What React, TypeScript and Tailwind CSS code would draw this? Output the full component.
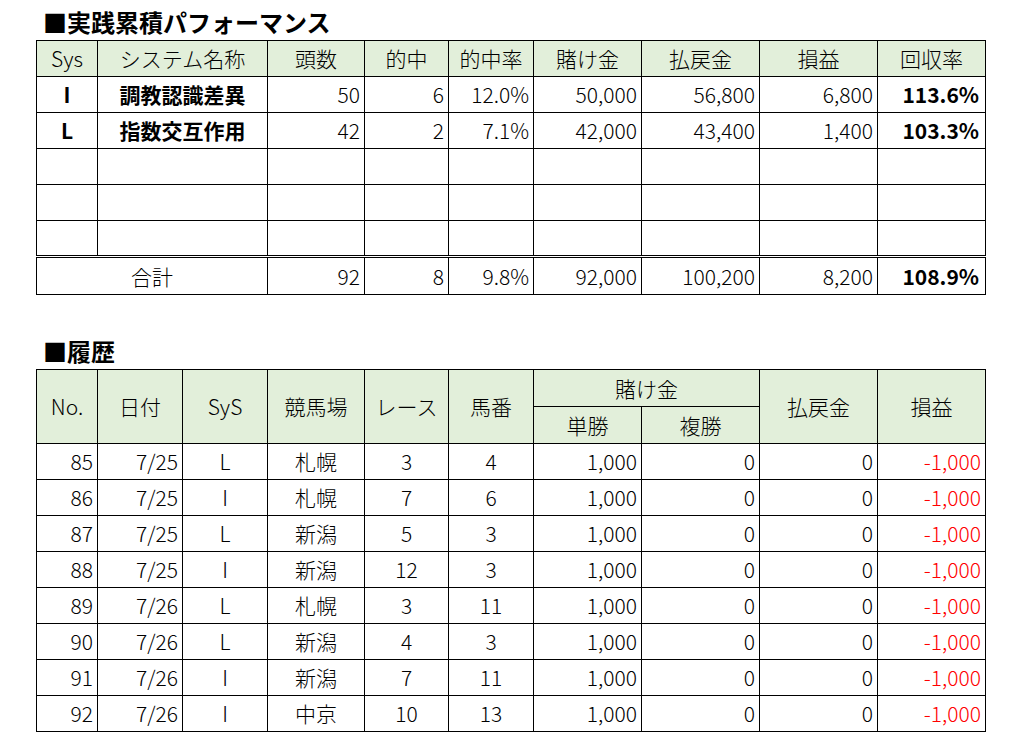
import React from "react";

const perf = [
  { sys: "I", name: "調教認識差異", n: "50", hit: "6", rate: "12.0%", bet: "50,000", ret: "56,800", pl: "6,800", rr: "113.6%" },
  { sys: "L", name: "指数交互作用", n: "42", hit: "2", rate: "7.1%", bet: "42,000", ret: "43,400", pl: "1,400", rr: "103.3%" },
];

const history = [
  ["85", "7/25", "L", "札幌", "3", "4"],
  ["86", "7/25", "I", "札幌", "7", "6"],
  ["87", "7/25", "L", "新潟", "5", "3"],
  ["88", "7/25", "I", "新潟", "12", "3"],
  ["89", "7/26", "L", "札幌", "3", "11"],
  ["90", "7/26", "L", "新潟", "4", "3"],
  ["91", "7/26", "I", "新潟", "7", "11"],
  ["92", "7/26", "I", "中京", "10", "13"],
];

const widths = ["w-[61px]", "w-[170px]", "w-[97px]", "w-[84px]", "w-[85px]", "w-[108px]", "w-[118px]", "w-[118px]", "w-[108px]"];
const histWidths = ["w-[61px]", "w-[85px]", "w-[85px]", "w-[97px]", "w-[84px]", "w-[85px]", "w-[108px]", "w-[118px]", "w-[118px]", "w-[108px]"];

const th = "border border-black bg-[#e2efda] text-center font-light";
const td = "border border-black h-[36px] p-0";
const num = `${td} text-right pr-[4px]`;
const totBase = "border border-black h-[38px] p-0 border-t-[3px] border-double";
const tot = `${totBase} text-right pr-[4px]`;

export default function App() {
  return (
    <div className="min-h-screen bg-white text-black font-['Noto_Sans_CJK_JP',sans-serif] font-light text-[21px] leading-none pl-[36px]">
      {/* 実践累積 */}
      <div className="h-[40px] pt-[4px] pl-[7px] leading-[36px] text-[24px] font-bold">■実践累積パフォーマンス</div>
      <table className="table-fixed border-collapse w-[950px]">
        <colgroup>
          {widths.map((w, i) => (
            <col key={i} className={w} />
          ))}
        </colgroup>
        <thead>
          <tr className="h-[36px]">
            <th className={th}>Sys</th>
            <th className={th}>システム名称</th>
            <th className={th}>頭数</th>
            <th className={th}>的中</th>
            <th className={th}>的中率</th>
            <th className={th}>賭け金</th>
            <th className={th}>払戻金</th>
            <th className={th}>損益</th>
            <th className={th}>回収率</th>
          </tr>
        </thead>
        <tbody>
          {perf.map((r) => (
            <tr key={r.sys}>
              <td className={`${td} text-center font-bold`}>{r.sys}</td>
              <td className={`${td} text-center font-bold`}>{r.name}</td>
              <td className={num}>{r.n}</td>
              <td className={num}>{r.hit}</td>
              <td className={num}>{r.rate}</td>
              <td className={num}>{r.bet}</td>
              <td className={num}>{r.ret}</td>
              <td className={num}>{r.pl}</td>
              <td className={`${num} font-bold pr-[6px]`}>{r.rr}</td>
            </tr>
          ))}
          {[0, 1, 2].map((i) => (
            <tr key={i}>
              {widths.map((_, j) => (
                <td key={j} className={td}></td>
              ))}
            </tr>
          ))}
          <tr>
            <td colSpan={2} className={`${totBase} text-center`}>合計</td>
            <td className={tot}>92</td>
            <td className={tot}>8</td>
            <td className={tot}>9.8%</td>
            <td className={tot}>92,000</td>
            <td className={tot}>100,200</td>
            <td className={tot}>8,200</td>
            <td className={`${totBase} text-right font-bold pr-[6px]`}>108.9%</td>
          </tr>
        </tbody>
      </table>

      {/* 履歴 */}
      <div className="mt-[34px] h-[40px] pt-[4px] pl-[7px] leading-[36px] text-[24px] font-bold">■履歴</div>
      <table className="table-fixed border-collapse w-[950px]">
        <colgroup>
          {histWidths.map((w, i) => (
            <col key={i} className={w} />
          ))}
        </colgroup>
        <thead>
          <tr className="h-[37px]">
            <th rowSpan={2} className={th}>No.</th>
            <th rowSpan={2} className={th}>日付</th>
            <th rowSpan={2} className={th}>SyS</th>
            <th rowSpan={2} className={th}>競馬場</th>
            <th rowSpan={2} className={th}>レース</th>
            <th rowSpan={2} className={th}>馬番</th>
            <th colSpan={2} className={th}>賭け金</th>
            <th rowSpan={2} className={th}>払戻金</th>
            <th rowSpan={2} className={th}>損益</th>
          </tr>
          <tr className="h-[37px]">
            <th className={th}>単勝</th>
            <th className={th}>複勝</th>
          </tr>
        </thead>
        <tbody>
          {history.map((r) => (
            <tr key={r[0]}>
              <td className={num}>{r[0]}</td>
              <td className={num}>{r[1]}</td>
              <td className={`${td} text-center`}>{r[2]}</td>
              <td className={`${td} text-center`}>{r[3]}</td>
              <td className={`${td} text-center`}>{r[4]}</td>
              <td className={`${td} text-center`}>{r[5]}</td>
              <td className={num}>1,000</td>
              <td className={num}>0</td>
              <td className={num}>0</td>
              <td className={`${num} text-[#ff0000]`}>-1,000</td>
            </tr>
          ))}
        </tbody>
      </table>
    </div>
  );
}
